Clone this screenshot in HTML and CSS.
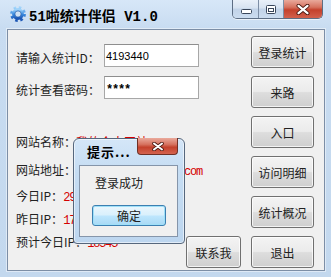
FILE: index.html
```html
<!DOCTYPE html>
<html lang="zh-CN">
<head>
<meta charset="utf-8">
<title>51啦统计伴侣 V1.0</title>
<link rel="stylesheet" href="styles.css">
</head>
<body>
<div class="window">
  <div class="titlebar">
    <svg class="app-icon" width="16" height="16" viewBox="0 0 16 16">
      <defs>
        <linearGradient id="gearGrad" x1="0" y1="0" x2="0" y2="1">
          <stop offset="0" stop-color="#9fd3fa"/>
          <stop offset="0.5" stop-color="#3d8de0"/>
          <stop offset="1" stop-color="#1b56b5"/>
        </linearGradient>
      </defs>
      <circle cx="8" cy="8" r="6.2" fill="none" stroke="url(#gearGrad)" stroke-width="3.4" stroke-dasharray="2.4 2.47"/>
      <circle cx="8" cy="8" r="4.5" fill="none" stroke="url(#gearGrad)" stroke-width="2.8"/>
      <circle cx="8" cy="8" r="3.1" fill="none" stroke="#1a4f9e" stroke-width="0.6"/>
    </svg>
    <span class="title">51啦统计伴侣 V1.0</span>
    <div class="caption-buttons">
      <div class="cap cap-min">
        <svg width="11" height="5" viewBox="0 0 11 5"><rect x="0.5" y="0.5" width="10" height="4" rx="1" fill="#fff" stroke="#39465a"/></svg>
      </div>
      <div class="cap cap-max">
        <svg width="10" height="9" viewBox="0 0 10 9"><rect x="0.5" y="0.5" width="9" height="8" rx="1" fill="#fff" stroke="#39465a"/><rect x="2.5" y="3.5" width="5" height="3" fill="none" stroke="#39465a"/></svg>
      </div>
      <div class="cap cap-close">
        <svg width="14" height="11" viewBox="0 0 14 11"><path d="M2.5 1.8 L11.5 9.2 M11.5 1.8 L2.5 9.2" stroke="#4a1810" stroke-width="4" stroke-linecap="round"/><path d="M2.5 1.8 L11.5 9.2 M11.5 1.8 L2.5 9.2" stroke="#fff" stroke-width="2.2" stroke-linecap="round"/></svg>
      </div>
    </div>
  </div>

  <div class="client">
    <div class="main-col">
      <div class="form-row">
        <span class="form-label">请输入统计ID：</span>
        <div class="textbox">4193440</div>
      </div>
      <div class="form-row">
        <span class="form-label">统计查看密码：</span>
        <div class="textbox password">****</div>
      </div>

      <div class="info site-info">
        <div class="info-row">网站名称：<span class="val val-cjk">我的个人网站</span></div>
        <div class="info-row">网站地址：<span class="val">http://www.51lala.com</span></div>
      </div>

      <div class="info ip-info">
        <div class="info-row">今日IP：<span class="val">2968</span></div>
        <div class="info-row">昨日IP：<span class="val">1732</span></div>
        <div class="info-row last-row">
          <span class="info-text">预计今日IP：<span class="val">18545</span></span>
          <button class="btn btn-contact">联系我</button>
        </div>
      </div>
    </div>

    <div class="side-col">
      <button class="btn">登录统计</button>
      <button class="btn">来路</button>
      <button class="btn">入口</button>
      <button class="btn">访问明细</button>
      <button class="btn">统计概况</button>
      <button class="btn">退出</button>
    </div>

    <div class="dialog">
      <div class="dialog-title">提示...</div>
      <div class="dialog-close">
        <svg width="12" height="9" viewBox="0 0 12 9"><path d="M2 1.5 L10 7.5 M10 1.5 L2 7.5" stroke="#4a1810" stroke-width="3.6" stroke-linecap="round"/><path d="M2 1.5 L10 7.5 M10 1.5 L2 7.5" stroke="#fff" stroke-width="2" stroke-linecap="round"/></svg>
      </div>
      <div class="dialog-body">
        <div class="dialog-msg">登录成功</div>
        <button class="btn-ok">确定</button>
      </div>
    </div>
  </div>
</div>
</body>
</html>
```

FILE: styles.css
```css
* {
  box-sizing: border-box;
  margin: 0;
  padding: 0;
}

html, body {
  width: 331px;
  height: 277px;
  overflow: hidden;
}

body {
  font-family: "Noto Sans CJK SC", "Liberation Sans", sans-serif;
  font-size: 12px;
  color: #222;
  background: #c4d9ef;
}

.window {
  width: 331px;
  height: 277px;
  display: flex;
  flex-direction: column;
  background: linear-gradient(180deg, #d7e7f8 0px, #c8dcf1 28px, #c3d8ee 100%);
}

/* ---------- title bar ---------- */
.titlebar {
  height: 29px;
  flex: none;
  display: flex;
  align-items: center;
}

.app-icon {
  margin-left: 10px;
  margin-top: -2px;
  flex: none;
}

.title {
  margin-left: 3px;
  font-family: "Liberation Mono", "Noto Sans CJK SC", monospace;
  font-weight: bold;
  font-size: 14px;
  color: #000;
  margin-top: 1px;
  white-space: pre;
}

.caption-buttons {
  align-self: flex-start;
  margin-left: auto;
  margin-right: 8px;
  display: flex;
  height: 19px;
  border: 1px solid #5d6e84;
  border-top: none;
  border-radius: 0 0 5px 5px;
  overflow: hidden;
  box-shadow: 0 1px 0 rgba(255,255,255,0.6);
}

.cap {
  height: 100%;
  display: flex;
  justify-content: center;
}

.cap-min, .cap-max {
  background: linear-gradient(180deg, #e9f0f9 0%, #d7e3f1 45%, #c2d3e8 50%, #cbdcef 100%);
  border-right: 1px solid #7d8ea5;
}

.cap-min {
  width: 26px;
  align-items: flex-end;
  padding-bottom: 4px;
  padding-left: 1px;
}

.cap-max {
  width: 25px;
  align-items: center;
}

.cap-close {
  width: 38px;
  align-items: center;
  background: linear-gradient(180deg, #e9a99b 0%, #d6725f 40%, #c4412c 55%, #d2604c 100%);
}

/* ---------- client area ---------- */
.client {
  flex: 1;
  margin: 0 6px 6px 7px;
  background: #f0f0f0;
  border: 1px solid #7c8ea6;
  box-shadow: 0 0 0 1px rgba(255,255,255,0.45);
  display: flex;
  gap: 10px;
  padding: 6px 10px 0 8px;
  position: relative;
}

.main-col {
  flex: 1;
  display: flex;
  flex-direction: column;
  padding-top: 8px;
}

.form-row {
  display: flex;
  align-items: flex-start;
  height: 23px;
}

.form-row + .form-row {
  margin-top: 9px;
}

.form-label {
  width: 88px;
  line-height: 16px;
  padding-top: 6px;
  white-space: nowrap;
}

.textbox {
  width: 95px;
  height: 23px;
  background: #fff;
  border: 1px solid #a7a7a7;
  border-top-color: #8e8e8e;
  padding-left: 1px;
  display: flex;
  align-items: center;
  font-family: "Liberation Sans", sans-serif;
  font-size: 11px;
  color: #000;
}

.textbox.password {
  font-family: "Liberation Mono", monospace;
  font-weight: bold;
  font-size: 12px;
  letter-spacing: -1.2px;
  padding-top: 5px;
}

.info {
  display: flex;
  flex-direction: column;
}

.site-info {
  margin-top: 29px;
}

.site-info .info-row {
  line-height: 28px;
  height: 28px;
}

.ip-info .info-row {
  line-height: 23px;
  height: 23px;
}

.info-row {
  white-space: nowrap;
}

.val {
  color: #d40000;
  font-family: "Liberation Mono", monospace;
  font-size: 12px;
  line-height: 1;
  letter-spacing: -1.2px;
}

.val-cjk {
  font-family: "Noto Sans CJK SC", sans-serif;
  letter-spacing: 0;
}

.last-row {
  display: flex;
  align-items: flex-start;
}

.info-text {
  line-height: 23px;
}

/* ---------- buttons ---------- */
.btn {
  height: 32px;
  border: 1px solid #707070;
  border-radius: 3px;
  background: linear-gradient(180deg, #f3f3f3 0%, #ebebeb 48%, #dddddd 52%, #cfcfcf 100%);
  box-shadow: inset 0 0 0 1px rgba(255,255,255,0.75);
  font-family: "Noto Sans CJK SC", sans-serif;
  font-size: 12px;
  color: #222;
  padding: 0;
}

.side-col {
  width: 63px;
  flex: none;
  display: flex;
  flex-direction: column;
  gap: 8px;
}

.btn-contact {
  margin-left: auto;
  margin-top: 6px;
  width: 55px;
  flex: none;
}

/* ---------- dialog ---------- */
.dialog {
  position: absolute;
  left: 65px;
  top: 108px;
  width: 112px;
  height: 106px;
  border: 1px solid #56677d;
  border-radius: 6px 6px 4px 4px;
  background: linear-gradient(180deg, #d4e6f8 0%, #c6ddf3 30%, #bdd6ef 100%);
  box-shadow: inset 0 0 0 1px rgba(255,255,255,0.55);
  padding: 0 6px 6px 5px;
  display: flex;
  flex-direction: column;
}

.dialog-title {
  height: 26px;
  line-height: 26px;
  padding-left: 8px;
  font-weight: bold;
  font-size: 13px;
  color: #000;
  letter-spacing: 1px;
}

.dialog-close {
  position: absolute;
  top: -1px;
  right: 6px;
  width: 41px;
  height: 17px;
  border: 1px solid #6f3026;
  border-top: none;
  border-radius: 0 0 4px 4px;
  background: linear-gradient(180deg, #eaaa9c 0%, #d6725f 40%, #c4412c 58%, #d4634f 100%);
  display: flex;
  align-items: center;
  justify-content: center;
}

.dialog-body {
  flex: 1;
  background: #f0f0f0;
  border: 1px solid #8595aa;
  padding: 10px 0 0 12px;
}

.dialog-msg {
  line-height: 14px;
  margin-left: 3px;
}

.btn-ok {
  display: block;
  margin-top: 15px;
  width: 74px;
  height: 21px;
  border: 1px solid #3c7fb1;
  border-radius: 3px;
  background: linear-gradient(180deg, #eaf6fd 0%, #d9f0fc 48%, #bee6fd 52%, #a7d9f5 100%);
  box-shadow: inset 0 0 0 1px #9fe0f8;
  font-family: "Noto Sans CJK SC", sans-serif;
  font-size: 12px;
  color: #222;
  padding: 0;
}
```
